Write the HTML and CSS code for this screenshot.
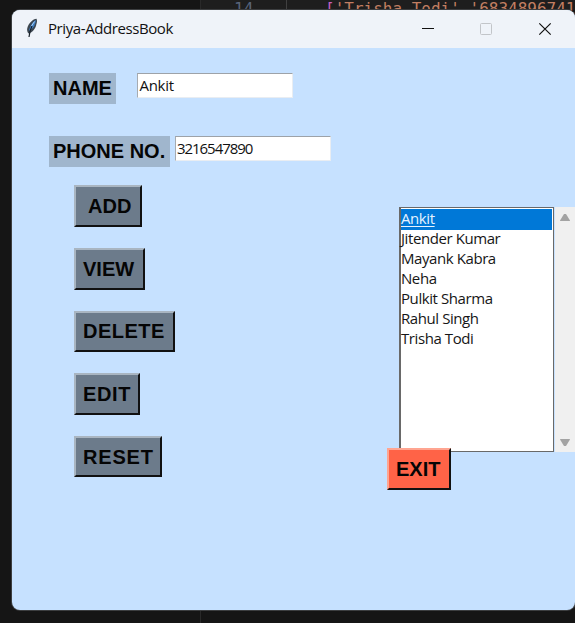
FILE: index.html
```
<!DOCTYPE html>
<html lang="en">
<head>
<meta charset="utf-8">
<title>Priya-AddressBook</title>
<link rel="stylesheet" href="styles.css">
</head>
<body>
<div class="editor">
  <div class="gutter"></div>
  <div class="line-number">14</div>
  <div class="code"><span class="bracket">[</span>'Trisha Todi'<span class="comma">,</span>'6834896741</div>
</div>
<main class="window">
  <header class="titlebar">
    <svg class="feather" width="14" height="20" viewBox="0 0 14 20">
      <path d="M11.500 .8C8 .8 3.600 5.500 2.300 10c-.5 2.200 0 4.300 1.300 5.500C7.500 14.500 11 10 11.300 6.500c.8-1.800 1-4 .2-5.700z" fill="#3c4650"/>
      <path d="M10.800 2C8 3.500 5 7.500 4 13c3-1.500 5.600-4.500 6-7.500.7-1 .9-2.200.8-3.500z" fill="#3f7fc4"/>
      <path d="M7 8C5.500 11 4.600 14 4 19" fill="none" stroke="#182028" stroke-width="1.200"/>
      <path d="M9.500 3.500L6.500 8" stroke="#a9cef0" stroke-width="1"/>
    </svg>
    <h1 class="title">Priya-AddressBook</h1>
    <svg class="controls" width="132" height="14" viewBox="0 0 132 14">
      <path d="M0 6.500h12" stroke="#111" fill="none"/>
      <rect x="58.500" y="1.500" width="11" height="11" rx="1" stroke="#c2c5c9" fill="none"/>
      <path d="M117.300 1.300l11.400 11.400M128.700 1.300L117.300 12.700" stroke="#111" stroke-width="1.200" fill="none"/>
    </svg>
  </header>
  <section class="content">
    <div class="form">
      <div class="field field-name"><label class="label"><span>NAME</span></label><div class="entry">Ankit</div></div>
      <div class="field field-phone"><label class="label"><span>PHONE NO.</span></label><div class="entry entry-phone">3216547890</div></div>
      <div class="actions">
        <button class="button add">ADD</button>
        <button class="button view">VIEW</button>
        <button class="button delete">DELETE</button>
        <button class="button edit">EDIT</button>
        <button class="button reset">RESET</button>
      </div>
    </div>
    <aside class="contacts">
      <div class="list-row">
        <ul class="list">
          <li class="selected"><span>Ankit</span></li>
          <li>Jitender Kumar</li>
          <li>Mayank Kabra</li>
          <li>Neha</li>
          <li>Pulkit Sharma</li>
          <li>Rahul Singh</li>
          <li>Trisha Todi</li>
        </ul>
        <div class="scrollbar">
          <svg width="12" height="9" viewBox="0 0 12 9"><path d="M5 1h2l4 6.500q0 .5-.5.500h-9Q1 8 1 7.500z" fill="#a3a3a3"/></svg>
          <svg width="12" height="9" viewBox="0 0 12 9"><path d="M5 8h2l4-6.500q0-.5-.5-.5h-9Q1 1 1 1.500z" fill="#a3a3a3"/></svg>
        </div>
      </div>
      <button class="button exit">EXIT</button>
    </aside>
  </section>
</main>
</body>
</html>
```
FILE: styles.css
```
* { box-sizing: border-box; }
body {
  margin: 0;
  width: 575px;
  height: 623px;
  overflow: hidden;
  position: relative;
  padding: 10px 0 0 12px;
  background: #151515;
  font-family: "Open Sans", "Noto Sans", sans-serif;
}
.editor {
  position: absolute;
  inset: 0 0 0 200px;
  border-left: 1px solid #292929;
  font: 16px/18px "DejaVu Sans Mono", monospace;
  white-space: pre;
}
.gutter {
  position: absolute;
  left: 0;
  top: 0;
  width: 374px;
  height: 10px;
  background: linear-gradient(90deg, transparent 85px, #404040 85px, #404040 86px, transparent 86px), #1e1e1e;
}
.line-number { position: absolute; left: 33px; top: 0; color: #59647a; }
.code { position: absolute; left: 124px; top: 0; color: #c27e62; }
.bracket { color: #c55fc0; }
.comma { color: #ccc; }
.window {
  position: relative;
  width: 563px;
  height: 600px;
  border-radius: 8px;
  overflow: hidden;
  background: #c6e1ff;
  box-shadow: 0 0 0 1px #3c3e40;
}
.titlebar {
  display: flex;
  align-items: center;
  height: 38px;
  padding: 0 20px 0 13px;
  background: #eff3f9;
}
.feather { margin-top: -3px; }
.title {
  flex: 1;
  margin: -2px 0 0 9px;
  font-size: 15px;
  line-height: 20px;
  font-weight: 400;
  letter-spacing: -0.41px;
  color: #111;
}
.controls { margin-right: 1px; }
.content { display: flex; height: 562px; }
.form { width: 375px; padding: 25px 0 0 37px; }
.field { display: flex; align-items: flex-start; height: 31px; }
.field-phone { margin-top: 32px; }
.label {
  width: 67px;
  height: 31px;
  padding-left: 4px;
  background: #a0b6cd;
  font: bold 20px/31px "Liberation Sans", Arial, sans-serif;
  white-space: nowrap;
  color: #050505;
}
.field-phone .label { width: 121px; }
.entry {
  width: 156px;
  height: 25px;
  margin-left: 20.5px;
  padding-left: 2px;
  background: #fff;
  border: 1px solid #e9edf2;
  border-top-color: #9da2a8;
  border-left-color: #a6abb1;
  font-size: 15px;
  line-height: 22px;
  letter-spacing: -0.3px;
  color: #111;
}
.entry-phone { margin-left: 5px; padding-left: 1px; letter-spacing: -1.05px; }
.actions {
  display: flex;
  flex-direction: column;
  align-items: flex-start;
  gap: 21px;
  padding: 18.4px 0 0 25px;
}
.button {
  display: block;
  height: 41.6px;
  padding: 0 0 0 7px;
  border: 2px solid;
  border-color: #a9b5c1 #111 #111 #a9b5c1;
  background: #6c7b8b;
  font: bold 20px/36px "Liberation Sans", Arial, sans-serif;
  text-align: left;
  white-space: nowrap;
  color: #050505;
}
.add { width: 68px; padding-left: 12px; }
.view { width: 71px; }
.delete { width: 101px; letter-spacing: 0.5px; }
.edit { width: 66px; letter-spacing: 0.6px; }
.reset { width: 88px; letter-spacing: 0.8px; }
.contacts { width: 188px; padding-top: 159px; }
.list-row { display: flex; margin-left: 12px; }
.list {
  list-style: none;
  width: 155px;
  height: 245px;
  margin: 0;
  padding: 1px 0 0;
  border: 1px solid #696969;
  border-left-width: 2px;
  background: #fff;
  font-size: 15px;
  line-height: 19px;
  letter-spacing: -0.42px;
  color: #161616;
}
.list li { height: 20px; white-space: nowrap; }
.list .selected { height: 21px; margin-right: 1px; margin-bottom: -1px; background: #0078d7; color: #e5f3ff; }
.selected span { text-decoration: underline; text-underline-offset: 2px; }
.scrollbar {
  display: flex;
  flex-direction: column;
  justify-content: space-between;
  align-items: center;
  width: 20px;
  margin-left: 1px;
  padding: 6px 0 5px;
  background: #f0f0f0;
}
.exit {
  position: relative;
  width: 64px;
  margin-top: -4px;
  background: #ff6347;
  border-color: #ffa591 #111 #111 #ffa591;
}
```
